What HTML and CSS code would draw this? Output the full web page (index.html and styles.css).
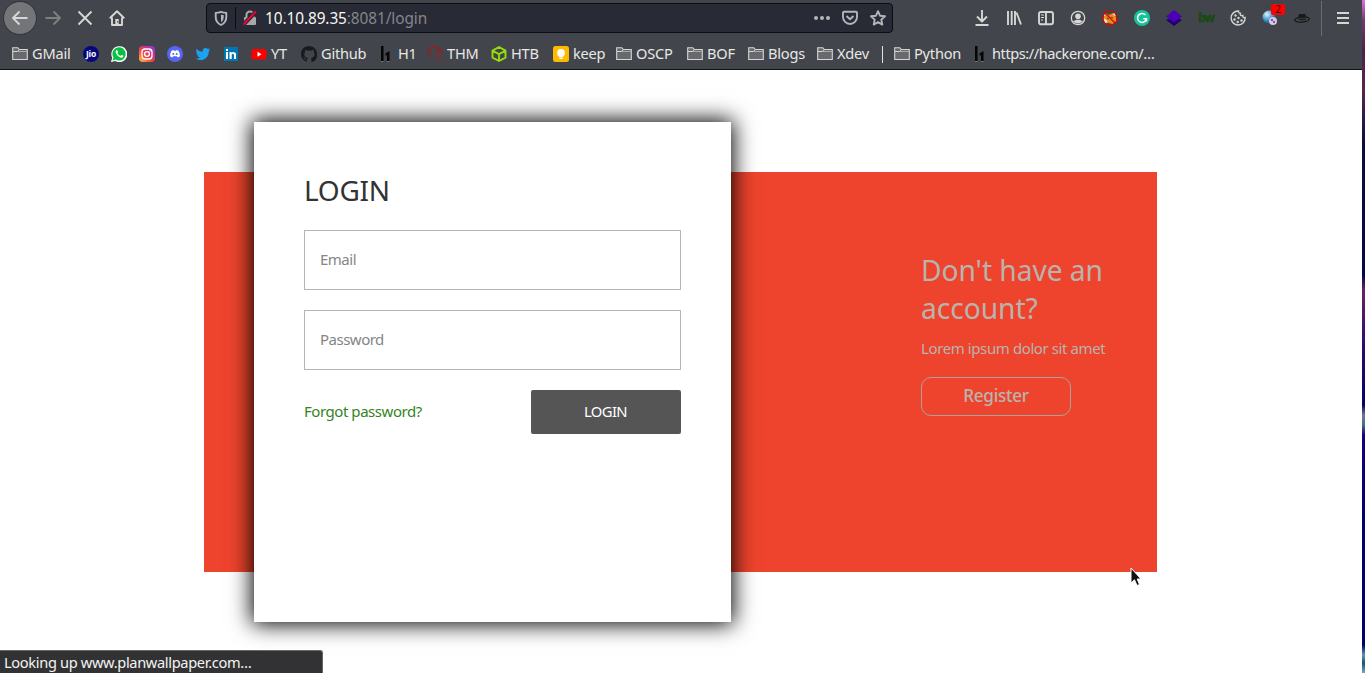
FILE: index.html
```
<!DOCTYPE html>
<html lang="en">
<head>
<meta charset="utf-8">
<title>Login</title>
<link rel="stylesheet" href="styles.css">
</head>
<body>
<svg class="defs" width="0" height="0">
  <defs>
    <symbol id="folder" viewBox="0 0 16 16"><path d="M.7 13.5V1.7h5.1l1.5 1.8h8v10z" fill="#67696e" stroke="#d6d6d3" stroke-width="1.1"/><path d="M1 5.5h4.8l1.4-1.7" fill="none" stroke="#d6d6d3"/><path d="M6 5.5h9" stroke="#aaa"/></symbol>
    <symbol id="hone" viewBox="0 0 16 16"><path d="M3 0h2.500v15H3zM7.500 7.500l4-2.500v10H9V9L7.500 9.800z" fill="#050505"/><path d="M3 15.500h2.500M9 15.500h2.500" stroke="#777"/></symbol>
    <linearGradient id="insta" x1="0" y1="1" x2="1" y2="0"><stop offset="0" stop-color="#ffc63a"/><stop offset=".4" stop-color="#f8483a"/><stop offset=".7" stop-color="#c92b9b"/><stop offset="1" stop-color="#674be0"/></linearGradient>
    <radialGradient id="globe" cx=".35" cy=".3" r=".7"><stop offset="0" stop-color="#e4f5ff"/><stop offset=".5" stop-color="#5aa8d8"/><stop offset="1" stop-color="#155a8d"/></radialGradient>
  </defs>
</svg>
<div class="desktop">
<div class="window">
  <header class="chrome">
    <div class="toolbar">
      <div class="nav">
        <span class="back"><svg class="ic" viewBox="0 0 16 16"><path d="M15.500 8H1M7.500 1.500 1 8l6.500 6.500" class="ln"/></svg></span>
        <svg class="ic dim" viewBox="0 0 16 16"><path d="M.5 8H15M8.500 1.500 15 8l-6.500 6.500" class="ln"/></svg>
        <svg class="ic" viewBox="0 0 16 16"><path d="M1.500 1.500l13 13M14.500 1.500l-13 13" class="ln"/></svg>
        <svg class="ic" viewBox="0 0 16 16"><path d="M.8 8.300 8 1.200l7.200 7.100M3 7.500V15h10V7.500" class="ln"/><path d="M6.300 9h3.400v6H6.300z" fill="#d6d6d3"/><path d="M8.200 11h1v1.500h-1z" fill="#42454b"/></svg>
      </div>
      <div class="urlbar">
        <svg class="ic gray" viewBox="0 0 16 16"><path d="M8 1.800c2 .8 3.500 1 5.300 1.100V7c0 4-2 6.500-5.300 8C4.700 13.500 2.700 11 2.700 7V2.900C4.500 2.800 6 2.600 8 1.800z" class="ln"/><path d="M8 4.500c1 .4 1.800.5 2.700.6V7c0 2.500-1 4.200-2.700 5.200z" fill="#b5b5b9"/></svg>
        <span class="divider"></span>
        <svg class="ic lock" viewBox="0 0 16 16"><path d="M4.500 7V5a3.500 3.500 0 0 1 7 0v2" fill="none" stroke="#a8a8aa" stroke-width="2"/><rect x="2" y="7" width="12" height="8" rx="1" fill="#a8a8aa"/><path d="M1.500 14.500 14 1.500" stroke="#282a36" stroke-width="4"/><path d="M1.500 14.500 14 1.500" stroke="#f5003d" stroke-width="1.900"/></svg>
        <span class="url"><b>10.10.89.35</b>:8081/login</span>
        <span class="urltools">
          <svg class="ic" viewBox="0 0 16 16"><g fill="#b5b5b9"><circle cx="2" cy="8" r="2"/><circle cx="8" cy="8" r="2"/><circle cx="14" cy="8" r="2"/></g></svg>
          <svg class="ic gray" viewBox="0 0 16 16"><path d="M2 1.800h12q1 0 1 1V7a7 7 0 0 1-14 0V2.800q0-1 1-1zM4.500 6 8 9.300 11.500 6" class="ln"/></svg>
          <svg class="ic gray" viewBox="0 0 16 16"><path d="M8 1.200 10 5.700l5 .5-3.700 3.400 1 5L8 12.100l-4.300 2.500 1-5L1 6.200l5-.5z" class="ln"/></svg>
        </span>
      </div>
      <div class="tools">
        <svg class="ic" viewBox="0 0 16 16"><path d="M8 0v11M3 6.500l5 5 5-5M1.500 15h13" class="ln"/></svg>
        <svg class="ic" viewBox="0 0 16 16"><path d="M2 1v14M5.700 1v14M9 1v14M10.500 2.500 15 14.500" class="ln"/></svg>
        <svg class="ic" viewBox="0 0 16 16"><rect x="1" y="2" width="14" height="12.300" rx="2" class="ln"/><path d="M8 2v12" class="ln"/><path d="M3 5h3M3 7.500h3M3 10h2" stroke="#d6d6d3"/></svg>
        <svg class="ic" viewBox="0 0 16 16"><circle cx="8" cy="8" r="6.700" fill="none" stroke="#d6d6d3" stroke-width="1.300"/><circle cx="8" cy="6.300" r="2.800" fill="#d6d6d3"/><path d="M3 11c2-.2 2.500-.8 3.300-1.200h3.400c.8.400 1.300 1 3.300 1.200-2.500 3.300-7.500 3.300-10 0z" fill="#d6d6d3"/></svg>
        <svg class="ic" viewBox="0 0 16 16"><path d="M2 5l2-2 3 2 4-2 3 4 .5 5-4 2-4-1-4 .5L1.500 10z" fill="#ee8a19"/><path d="M1.500 8l4 3-2 3zM12 2.500l2 3.500-3-1zM2 4l2 1-2 1z" fill="#f3ead8"/><path d="M5 8l2 1M9 7l2 1" stroke="#623c12"/><circle cx="8" cy="8" r="7.200" fill="none" stroke="#c90b0b" stroke-width="1.300"/><path d="M3 3l10 10" stroke="#c90b0b" stroke-width="1.300"/></svg>
        <svg class="ic" viewBox="0 0 16 16"><circle cx="8" cy="8" r="8" fill="#15c39a"/><path d="M11.500 5a4.500 4.500 0 1 0 1 3.700H9.300M12.500 8.500v3" fill="none" stroke="#fff" stroke-width="1.500"/></svg>
        <svg class="ic" viewBox="0 0 16 16"><path d="M0 10l8-4 8 4-8 6z" fill="#22006f"/><path d="M8 0l8 6.500-8 6-8-6z" fill="#4a00b5"/></svg>
        <span class="bw">bw</span>
        <svg class="ic" viewBox="0 0 16 16"><path d="M8.500 1a7 7 0 1 0 6.600 6.500c-1.800.5-2.600-.5-2.300-2-2 .4-3-.6-2.400-2.200C9 3.200 8.300 2.300 8.500 1z" fill="none" stroke="#d6d6d3" stroke-width="1.400"/><g fill="#d6d6d3"><circle cx="5.500" cy="5.500" r="1.200"/><circle cx="4.500" cy="9.500" r="1.200"/><circle cx="8.500" cy="8" r="1.200"/><circle cx="7.700" cy="12" r="1.200"/><circle cx="11.500" cy="10.500" r="1.200"/></g></svg>
        <span class="globe"><svg class="ic" viewBox="0 0 16 16"><circle cx="7" cy="7" r="6.500" fill="url(#globe)"/><circle cx="11" cy="11" r="4" fill="#d7c8e7"/><path d="M9 9h2v2H9zM11 11h2v2h-2z" fill="#8a519b"/></svg><span class="badge">2</span></span>
        <svg class="ic" viewBox="0 0 16 16"><ellipse cx="8" cy="9.500" rx="7.500" ry="2.600" transform="rotate(-5 8 9.500)" fill="#42454b" stroke="#080808" stroke-width=".9"/><path d="M4.200 9.300 4.600 4.600q1.700-1.100 3.600-.4 1.800-.8 3.400.2l.4 5Q8 11 4.200 9.300z" fill="#17181a"/><path d="M4.600 8q4 1.300 7.200 0" fill="none" stroke="#666" stroke-width=".5"/></svg>
      </div>
      <div class="menu"><svg class="ic" viewBox="0 0 16 16"><path d="M2 3h12M2 8h12M2 13h12" class="ln"/></svg></div>
    </div>
    <nav class="bookmarks">
      <a><svg class="ic"><use href="#folder"/></svg>GMail</a>
      <a><svg class="ic" viewBox="0 0 16 16"><circle cx="8" cy="8" r="8" fill="#07077d"/><text x="8" y="11" class="jio">Jio</text></svg></a>
      <a><svg class="ic" viewBox="0 0 16 16"><path d="M0 16l1.200-4.200A8 8 0 1 1 4.200 15z" fill="#fff"/><path d="M1.500 14.500l1-3A6.600 6.600 0 1 1 4.700 13.600z" fill="#08c143"/><path d="M5.300 4.200c-2.200 2 1.900 7.500 5.400 7.500 1.500 0 2-1.700 1.500-2.100L10.500 9l-1 1Q7.500 9.300 6.400 7.200l.7-1-.7-2z" fill="#fff"/></svg></a>
      <a><svg class="ic" viewBox="0 0 16 16"><rect width="16" height="16" rx="4" fill="url(#insta)"/><rect x="3" y="3" width="10" height="10" rx="3" fill="none" stroke="#fff" stroke-width="1.300"/><circle cx="8" cy="8" r="2.400" fill="none" stroke="#fff" stroke-width="1.300"/><circle cx="11" cy="5" r=".7" fill="#fff"/></svg></a>
      <a><svg class="ic" viewBox="0 0 16 16"><circle cx="8" cy="8" r="8" fill="#5865f2"/><path d="M4.500 4.700l2-.7.500.8h2l.5-.8 2 .7q1.500 2.300 1.500 5.500l-2.300 1.300-.8-1.200H6.100l-.8 1.200L3 10.200q0-3.200 1.500-5.500z" fill="#fff"/><circle cx="6.300" cy="8" r="1" fill="#5865f2"/><circle cx="9.700" cy="8" r="1" fill="#5865f2"/></svg></a>
      <a><svg class="ic" viewBox="0 0 24 24"><path d="M23 5.300l-2.300 2.400C21 15 15.500 21 8 21c-2.500 0-5-.8-7-2 2.500.2 4.600-.5 6.400-1.900-2-.1-3.600-1.400-4.100-3.100l2-.1C3 13.300 1.700 11.500 1.700 9.300l2 .6C1.700 8.400 1.100 5.900 2.300 4c2.400 2.800 5.700 4.500 9.300 4.700C10.900 5.500 13 3 16 3c1.300 0 2.500.5 3.300 1.400l2.800-1-1.900 2.500z" fill="#1da1f2"/></svg></a>
      <a><svg class="ic" viewBox="0 0 16 16"><path d="M1 1h14v14H1z" fill="#0077b5"/><path d="M3 6h2v7H3zM3 3h2v2H3zM6.500 6h2v1q2.500-2.300 4.500.5V13h-2V9q-.7-2-2.300-.5V13H6.500z" fill="#fff"/></svg></a>
      <a><svg class="ic" viewBox="0 0 16 16"><rect x=".5" y="3" width="15" height="10.500" rx="2.500" fill="#f00"/><path d="M6.500 5.800v4.900l4-2.450z" fill="#fff"/></svg>YT</a>
      <a><svg class="ic" viewBox="0 0 16 16"><path fill="#191a1d" d="M8 0C3.580 0 0 3.580 0 8c0 3.540 2.290 6.530 5.470 7.590.4.070.55-.17.55-.38v-1.490c-2.010.37-2.530-.49-2.690-.94-.36-.92-.8-1.100-1.120-1.400.8-.3 1.500.4 1.920 1.100.72 1.210 1.870.87 2.330.66.070-.52.280-.87.510-1.070-1.780-.2-3.640-.89-3.640-3.950 0-.87.310-1.590.82-2.150-.08-.2-.36-1.020.08-2.120 0 0 .67-.21 2.200.82a7.400 7.400 0 0 1 4 0c1.530-1.040 2.200-.82 2.200-.82.44 1.100.16 1.920.08 2.120.51.560.82 1.270.82 2.150 0 3.070-1.870 3.750-3.650 3.950.29.250.54.730.54 1.480v2.200c0 .21.150.46.550.38A8 8 0 0 0 16 8c0-4.420-3.580-8-8-8z"/></svg>Github</a>
      <a><svg class="ic"><use href="#hone"/></svg>H1</a>
      <a><svg class="ic" viewBox="0 0 16 16"><path d="M6 8H2.500C0 7 0 4 3 3.700 4-.5 10-.5 10.500 2.500c3-.5 4 1.500 3.500 3.500H9" fill="none" stroke="#b4120f" stroke-width="1.100"/><path d="M7 9h3M12 9h3M9 11.500h5M8 14h2M12 14.500h4" stroke="#94272a" stroke-width="1.200"/></svg>THM</a>
      <a><svg class="ic" viewBox="0 0 16 16"><path d="M8 1l6.500 3.600v7L8 15l-6.500-3.400v-7zM2 5l6 3.200L14 5M8 8v7" fill="none" stroke="#95df09" stroke-width="1.900" stroke-linejoin="round"/></svg>HTB</a>
      <a><svg class="ic" viewBox="0 0 16 16"><rect width="16" height="16" rx="2.500" fill="#ffba00"/><circle cx="8" cy="7" r="3.900" fill="#fff"/><path d="M6.300 10h3.400v3H6.300z" fill="#fff"/><path d="M6.300 11.400h3.400" stroke="#ffba00" stroke-width=".6"/></svg>keep</a>
      <a><svg class="ic"><use href="#folder"/></svg>OSCP</a>
      <a><svg class="ic"><use href="#folder"/></svg>BOF</a>
      <a><svg class="ic"><use href="#folder"/></svg>Blogs</a>
      <a><svg class="ic"><use href="#folder"/></svg>Xdev</a>
      <span class="sep"></span>
      <a><svg class="ic"><use href="#folder"/></svg>Python</a>
      <a class="long"><svg class="ic"><use href="#hone"/></svg>https://hackerone.com/…</a>
    </nav>
  </header>
  <main class="page">
    <section class="band">
      <form class="card">
        <h1>LOGIN</h1>
        <input type="text" placeholder="Email">
        <input type="password" placeholder="Password">
        <div class="actions"><a class="forgot">Forgot password?</a><button type="button" class="submit">LOGIN</button></div>
      </form>
      <aside class="signup">
        <h2>Don't have an account?</h2>
        <p>Lorem ipsum dolor sit amet</p>
        <button type="button" class="register">Register</button>
      </aside>
    </section>
  </main>
  <div class="status">Looking up www.planwallpaper.com…</div>
  <svg class="cursor" viewBox="0 0 12 20"><path d="M1 1v15l3.500-3.200L7 18.500l2.500-1-2.300-5.500H11z" fill="#111" stroke="#fff" stroke-width="1"/></svg>
</div>
</div>
</body>
</html>
```
FILE: styles.css
```
* { box-sizing: border-box; }
body { margin: 0; font-family: "Noto Sans", sans-serif; overflow: hidden; }
.defs { position: absolute; }
.desktop {
  width: 1365px; height: 673px; padding-right: 3px;
  background: linear-gradient(#e070d8 0, #743b70 20px, #47244d 50px, #5a2450 90px, #081033 145px, #020846 275px, #66265f 290px, #2a0870 350px, #030368 405px, #75758c 415px, #45707c 425px, #150080 435px, #00006b 520px, #00006b 645px, #5d9aa8 655px, #175574 663px, #75aab5 673px);
}
.window { height: 673px; display: flex; flex-direction: column; background: #fff; position: relative; }
.chrome { height: 70px; background: #42454b; border-bottom: 1px solid #101116; flex: none; }
.toolbar { height: 36px; display: flex; align-items: center; }
.ic { width: 16px; height: 16px; flex: none; display: block; }
.ln { fill: none; stroke: #d6d6d3; stroke-width: 1.9; stroke-linejoin: round; }
.gray .ln { stroke: #b5b5b9; }
.nav { width: 206px; display: flex; align-items: center; gap: 16px; padding-left: 3px; flex: none; }
.back { width: 34px; height: 34px; margin-right: -8px; border-radius: 50%; background: #737579; border: 1px solid #303237; display: flex; align-items: center; justify-content: center; }
.dim { opacity: .4; }
.urlbar { width: 687px; height: 30px; flex: none; background: #282a36; border: 1px solid #0c0d12; border-radius: 4px; display: flex; align-items: center; padding: 0 6px; }
.divider { width: 1px; height: 22px; background: #0c0d12; margin: 0 6px 0 6px; }
.url { margin-left: 7px; padding-top: 2px; font-size: 15.4px; line-height: 26px; letter-spacing: -.09px; color: #85868b; }
.url b { font-weight: 400; color: #f8f8f2; }
.urltools { display: flex; gap: 12px; margin-left: auto; }
.tools { width: 428px; padding-left: 81px; display: flex; gap: 16px; flex: none; align-items: center; }
.bw { width: 16px; font: 700 12px/16px "Open Sans", sans-serif; color: #174a12; -webkit-text-stroke: .4px #174a12; letter-spacing: -1px; flex: none; }
.globe { position: relative; }
.badge { position: absolute; left: 9px; top: -6px; width: 14px; height: 11px; background: #f00; border-radius: 2px; font-size: 10px; line-height: 11px; text-align: center; color: #111; }
.menu { height: 35px; border-left: 1px solid #6c6d70; padding-left: 13px; display: flex; align-items: center; }
.bookmarks {
  height: 33px; padding: 1px 0 0 12px; display: grid; align-items: center; white-space: nowrap;
  grid-template-columns: 71px 28px 28px 28px 28px 28px 28px 50px 77px 49px 64px 62px 63px 71px 61px 69px 65px 12px 78px 200px;
}
.bookmarks a { display: flex; align-items: center; gap: 4px; color: #e8e8e5; font-size: 14.6px; letter-spacing: -.22px; line-height: 20px; }
.bookmarks .ic { margin-top: 2px; }
.sep { width: 1px; height: 17px; margin-top: 2px; background: #e2e2df; }
.bookmarks .long { letter-spacing: -.45px; }
.jio { font: 700 8.5px "Open Sans", sans-serif; fill: #fff; text-anchor: middle; letter-spacing: -.2px; }
.page { flex: 1; padding: 102px 0 0 204px; color: #333; }
.band { width: 953px; height: 400px; background: #ee442d; display: flex; align-items: center; padding-left: 50px; }
.card { width: 477px; height: 500px; flex: none; background: #fff; padding: 50px; box-shadow: 0 0 21px 2px #000; display: flex; flex-direction: column; gap: 20px; }
h1 { margin: 0; height: 38px; font-size: 28px; font-weight: 400; line-height: 36px; letter-spacing: -.3px; }
.card input { width: 377px; height: 60px; border: 1px solid #b5b5b5; padding: 0 15px 2px; font: 15px "Noto Sans", sans-serif; letter-spacing: -.5px; background: #fff; }
.card input::placeholder { color: #858585; }
.actions { display: flex; align-items: center; justify-content: space-between; }
.forgot { color: #358325; font-size: 15px; letter-spacing: -.45px; padding-bottom: 2px; }
.submit { width: 150px; height: 44px; border: 0; border-radius: 2px; background: #555; color: #fff; font: 14.8px "Noto Sans", sans-serif; letter-spacing: -.6px; padding: 0 1px 2px 0; }
.signup { width: 186px; height: 400px; margin-left: 190px; padding-top: 79px; color: #b9b3ae; }
.signup h2 { margin: 0; font-size: 28.2px; font-weight: 400; line-height: 38px; letter-spacing: -.05px; }
.signup p { margin: 9px 0 16px; font-size: 15px; line-height: 25px; letter-spacing: -.4px; white-space: nowrap; }
.register { display: block; width: 150px; height: 39px; border: 1px solid #aaa19c; border-radius: 10px; background: none; color: inherit; font: 500 17.2px "Noto Sans", sans-serif; letter-spacing: -.3px; padding: 0 0 2px; }
.status { position: absolute; left: 0; bottom: 0; width: 323px; height: 23px; padding-left: 4px; background: #323234; border-top: 1px solid #68686a; border-right: 1px solid #68686a; border-radius: 0 3px 0 0; color: #f4f4f1; font-size: 14.6px; letter-spacing: -.33px; line-height: 23px; }
.cursor { position: absolute; left: 1130px; top: 567px; width: 12px; height: 20px; }
```
